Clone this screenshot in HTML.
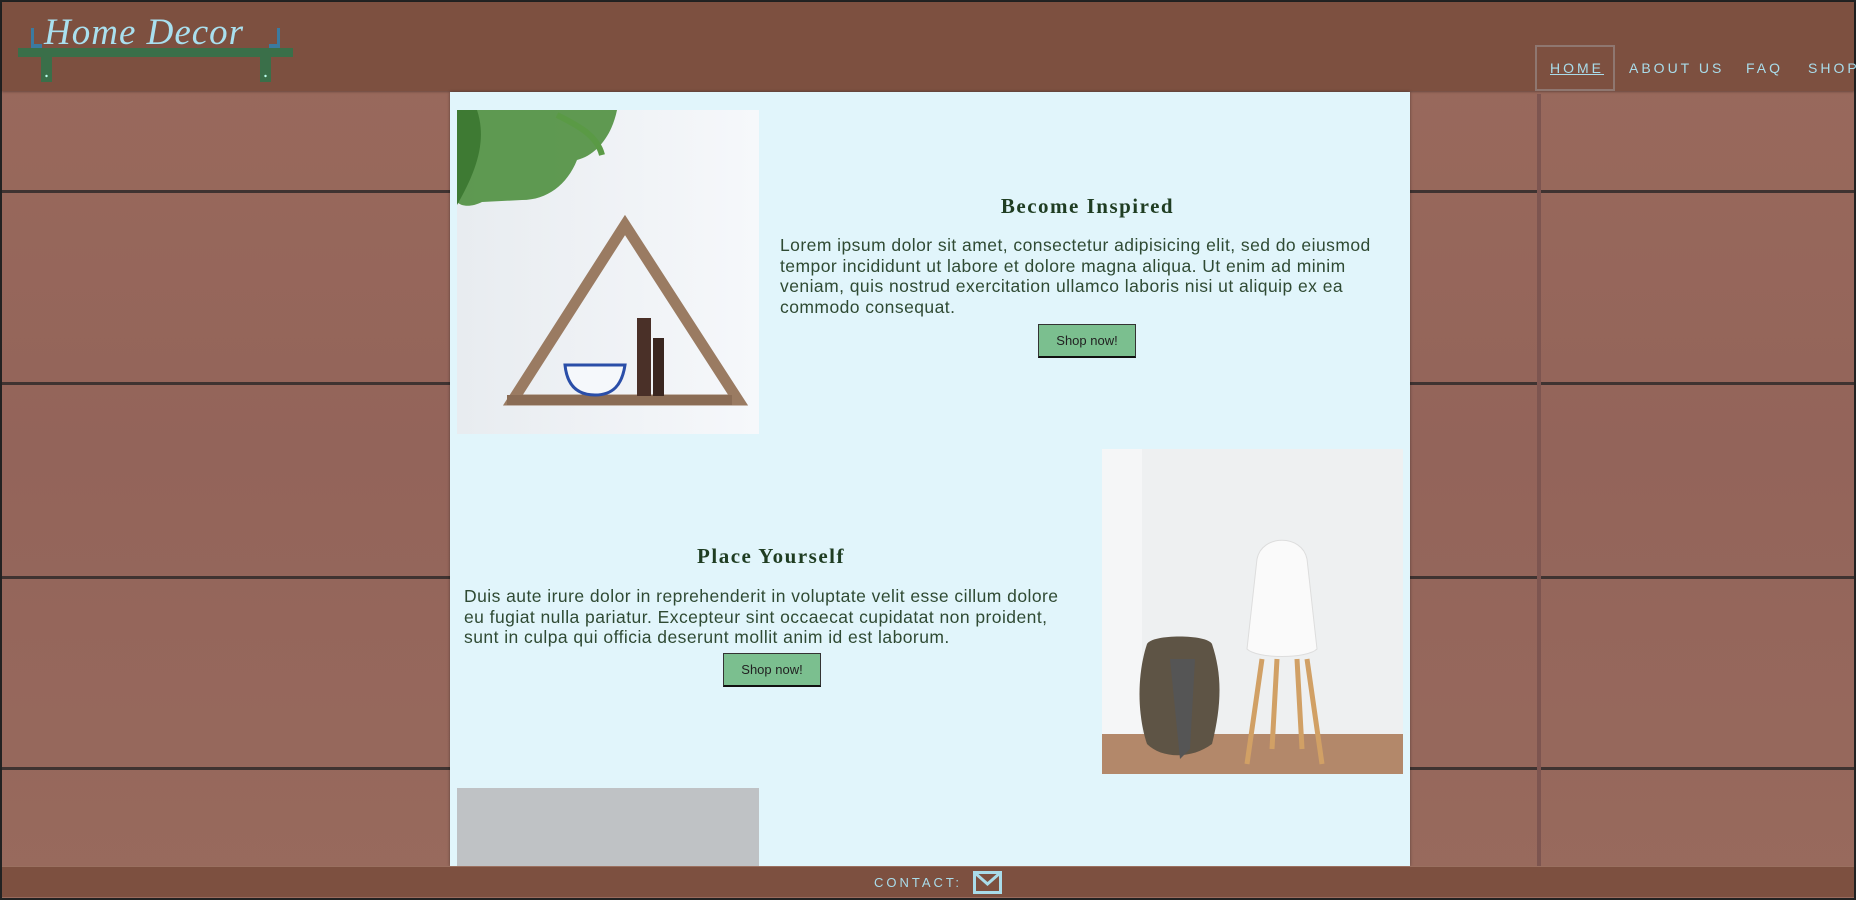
<!DOCTYPE html>
<html><head><meta charset="utf-8"><style>
*{margin:0;padding:0;box-sizing:border-box}
body{width:1856px;height:900px;overflow:hidden;background:#222;position:relative;font-family:"Liberation Sans",sans-serif}
#wood{position:absolute;left:2px;top:2px;width:1852px;height:896px;background:linear-gradient(180deg,#9a6a5c,#93645a 50%,#986a5d);}
.hs{position:absolute;left:0;width:1852px;height:3px;background:#3f3331}
.vs{position:absolute;top:92px;width:4px;height:780px;background:#7d5550}
header{position:absolute;left:2px;top:2px;width:1852px;height:89px;background:#7d5040;box-shadow:0 1px 2px rgba(0,0,0,.3)}
#logo{position:absolute;left:0;top:0}
.logotext{position:absolute;left:42px;top:9px;font-family:"Liberation Serif",serif;font-style:italic;font-size:37px;color:#a9e0ef;letter-spacing:1px;white-space:nowrap}
nav a{position:absolute;top:58px;font-size:14px;letter-spacing:3px;color:#a9dcea;text-decoration:none}
#home{position:absolute;left:1533px;top:43px;width:80px;height:46px;border:2px solid #8f7770}
#panel{position:absolute;left:450px;top:92px;width:960px;height:774px;background:#e1f5fb;box-shadow:0 0 3px rgba(0,0,0,.4)}
h2{position:absolute;font-family:"Liberation Serif",serif;font-weight:bold;font-size:21px;letter-spacing:1.5px;color:#1f3d22;text-align:center}
p{position:absolute;font-size:17.5px;letter-spacing:0.45px;line-height:20.7px;color:#2f4a33}
.btn{position:absolute;background:#7bbf8f;border:1px solid #333;border-bottom:2px solid #111;font-size:13px;color:#222;text-align:center}
footer{position:absolute;left:2px;top:866px;width:1852px;height:31px;background:#7d5040;border-top:1px solid #9a7060}
</style></head><body>
<div id="wood">
<div class="hs" style="top:188px"></div>
<div class="hs" style="top:380px"></div>
<div class="hs" style="top:574px"></div>
<div class="hs" style="top:765px"></div>
<div class="vs" style="left:1535px"></div>
</div>
<header>
<div class="logotext">Home Decor</div>
<svg id="logo" width="300" height="80">
<rect x="16" y="46" width="275" height="9" fill="#3a6f49"/>
<rect x="39" y="55" width="11" height="26" fill="#3a6f49"/>
<rect x="258" y="55" width="11" height="26" fill="#3a6f49"/>
<circle cx="44.5" cy="74" r="1.2" fill="#bfe"/><circle cx="263.5" cy="74" r="1.2" fill="#bfe"/>
<path d="M29 46v-20h3v16h8v4z" fill="#3b7aa0"/>
<path d="M278 46v-20h-3v16h-8v4z" fill="#3b7aa0"/>
</svg>
<nav>
<div id="home"></div>
<a style="left:1548px;text-decoration:underline">HOME</a>
<a style="left:1627px">ABOUT US</a>
<a style="left:1744px">FAQ</a>
<a style="left:1806px">SHOP</a>
</nav>
</header>
<div id="panel">
<svg style="position:absolute;left:7px;top:18px" width="302" height="324">
<defs><linearGradient id="w" x1="0" x2="1"><stop offset="0" stop-color="#e8ecf0"/><stop offset="1" stop-color="#f6f8fb"/></linearGradient></defs>
<rect width="302" height="324" fill="url(#w)"/>
<path d="M0 0h160c-5 25-20 45-40 50-10 25-30 40-55 40l-40 2c-10 5-20 5-25 0z" fill="#4f8f3f" opacity=".9"/>
<path d="M20 0c10 30 0 60-20 95v-95z" fill="#3e7a33"/>
<path d="M100 5c20 10 40 20 45 40" stroke="#5a9a45" stroke-width="6" fill="none"/>
<path d="M168 115l-112 175h225z" fill="none" stroke="#9a7b62" stroke-width="11"/>
<rect x="50" y="285" width="225" height="10" fill="#8a6c55"/>
<path d="M108 255h60c-3 20-12 30-30 30s-28-10-30-30z" fill="#f5f8fb" stroke="#2a4ea8" stroke-width="3"/>
<rect x="180" y="208" width="14" height="78" fill="#4a3028"/>
<rect x="196" y="228" width="11" height="58" fill="#3a2620"/>
</svg>
<h2 style="left:260px;width:755px;top:102px">Become Inspired</h2>
<p style="left:330px;top:143px;width:625px">Lorem ipsum dolor sit amet, consectetur adipisicing elit, sed do eiusmod tempor incididunt ut labore et dolore magna aliqua. Ut enim ad minim veniam, quis nostrud exercitation ullamco laboris nisi ut aliquip ex ea commodo consequat.</p>
<div class="btn" style="left:588px;top:232px;width:98px;height:34px;line-height:31px">Shop now!</div>
<svg style="position:absolute;left:652px;top:357px" width="301" height="325">
<rect width="301" height="325" fill="#eef0f1"/>
<rect width="40" height="290" fill="#f5f6f7"/>
<path d="M0 285h301v40h-301z" fill="#b3886a"/>
<path d="M45 195c5-10 60-10 65 0 10 30 10 60 0 100-20 15-50 15-65 0-10-30-10-70 0-100z" fill="#5e5445"/>
<path d="M68 210h25l-5 90-10 10z" fill="#555"/>
<path d="M155 110c5-25 45-25 50 0l10 90c-10 10-60 10-70 0z" fill="#fafafa" stroke="#ddd"/>
<path d="M160 210l-15 105M205 210l15 105M175 210l-5 90M195 210l5 90" stroke="#d1a065" stroke-width="5"/>
</svg>
<h2 style="left:0;width:642px;top:452px">Place Yourself</h2>
<p style="left:14px;top:494px;width:612px">Duis aute irure dolor in reprehenderit in voluptate velit esse cillum dolore eu fugiat nulla pariatur. Excepteur sint occaecat cupidatat non proident, sunt in culpa qui officia deserunt mollit anim id est laborum.</p>
<div class="btn" style="left:273px;top:561px;width:98px;height:34px;line-height:31px">Shop now!</div>
<div style="position:absolute;left:7px;top:696px;width:302px;height:78px;background:#bfc2c5"></div>
</div>
<footer>
<span style="position:absolute;left:872px;top:8px;font-size:13px;letter-spacing:3px;color:#a9dcea">CONTACT:</span>
<svg style="position:absolute;left:971px;top:4px" width="29" height="23"><rect x="1.5" y="1.5" width="26" height="20" fill="none" stroke="#a9dcea" stroke-width="3"/><path d="M2 2l12.5 11L27 2" fill="none" stroke="#a9dcea" stroke-width="3"/></svg>
</footer>
</body></html>
